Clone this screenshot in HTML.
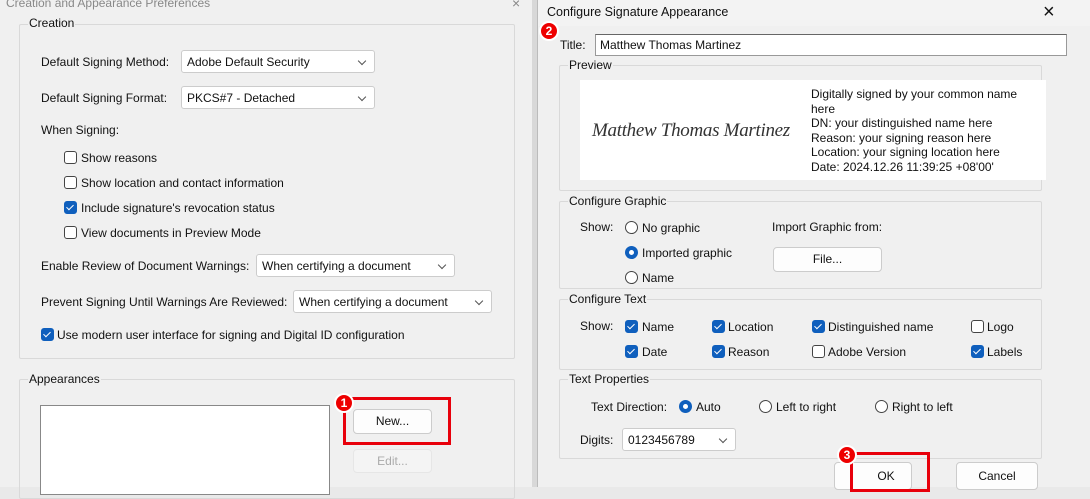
<!DOCTYPE html><html><head><style>
*{box-sizing:border-box}body{margin:0;width:1090px;height:487px;overflow:hidden;background:#e9e9e9;font-family:"Liberation Sans",sans-serif;font-size:12px;color:#111;position:relative}
.a{position:absolute;white-space:nowrap}
.grp{position:absolute;border:1px solid #d9d9d9;border-radius:2px}
.gl{position:absolute;top:-8px;left:8px;background:#f0f0f0;padding:0 1px;font-size:12px}
.sel{position:absolute;background:#fff;border:1px solid #ccc;border-radius:3px;height:23px;padding:4px 5px}
.sel:after{content:"";position:absolute;right:9px;top:7px;width:5px;height:5px;border-right:1px solid #555;border-bottom:1px solid #555;transform:rotate(45deg)}
.cb{position:absolute;width:13px;height:13px;border:1px solid #444;border-radius:3px;background:#fff}
.cb.on{background:#0f5fbd;border-color:#0f5fbd}
.cb.on:after{content:"";position:absolute;left:3px;top:1px;width:3px;height:6px;border-right:1.5px solid #fff;border-bottom:1.5px solid #fff;transform:rotate(45deg)}
.rb{position:absolute;width:13px;height:13px;border:1px solid #444;border-radius:50%;background:#fff}
.rb.on{border:4px solid #0f5fbd}
.btn{position:absolute;background:#fdfdfd;border:1px solid #ccc;border-radius:4px;text-align:center;line-height:23px}
.badge{position:absolute;width:20px;height:20px;border-radius:50%;background:#e00;border:2px solid #fff;color:#fff;font-weight:bold;font-size:12px;text-align:center;line-height:16px}
.red{position:absolute;border:3px solid #e8000b}
</style></head><body>
<div class="a" style="left:0;top:0;width:532px;height:487px;background:#f0f0f0"></div>
<div class="a" style="left:532px;top:0;width:5px;height:487px;background:#d8d8d8"></div>
<div class="a" style="left:6px;top:-4px;color:#888">Creation and Appearance Preferences</div>
<div class="a" style="left:512px;top:-5px;color:#888;font-size:14px">×</div>
<div class="grp" style="left:19px;top:24px;width:496px;height:335px"><span class="gl" style="top:-9px">Creation</span></div>
<div class="a" style="left:41px;top:55px">Default Signing Method:</div>
<div class="sel" style="left:181px;top:50px;width:194px">Adobe Default Security</div>
<div class="a" style="left:41px;top:91px">Default Signing Format:</div>
<div class="sel" style="left:181px;top:86px;width:194px">PKCS#7 - Detached</div>
<div class="a" style="left:41px;top:123px">When Signing:</div>
<div class="cb" style="left:64px;top:151px"></div><div class="a" style="left:81px;top:151px">Show reasons</div>
<div class="cb" style="left:64px;top:176px"></div><div class="a" style="left:81px;top:176px">Show location and contact information</div>
<div class="cb on" style="left:64px;top:201px"></div><div class="a" style="left:81px;top:201px">Include signature's revocation status</div>
<div class="cb" style="left:64px;top:226px"></div><div class="a" style="left:81px;top:226px">View documents in Preview Mode</div>
<div class="a" style="left:41px;top:259px">Enable Review of Document Warnings:</div>
<div class="sel" style="left:256px;top:254px;width:199px">When certifying a document</div>
<div class="a" style="left:41px;top:295px">Prevent Signing Until Warnings Are Reviewed:</div>
<div class="sel" style="left:293px;top:290px;width:199px">When certifying a document</div>
<div class="cb on" style="left:41px;top:328px"></div><div class="a" style="left:57px;top:328px">Use modern user interface for signing and Digital ID configuration</div>
<div class="grp" style="left:19px;top:379px;width:496px;height:120px"><span class="gl">Appearances</span></div>
<div class="a" style="left:40px;top:405px;width:290px;height:90px;background:#fff;border:1px solid #888"></div>
<div class="btn" style="left:353px;top:409px;width:79px;height:25px">New...</div>
<div class="btn" style="left:353px;top:449px;width:79px;height:24px;background:#f4f4f4;border-color:#e6e6e6;color:#aaa">Edit...</div>
<div class="red" style="left:343px;top:397px;width:108px;height:48px"></div>
<div class="badge" style="left:334px;top:393px">1</div>

<div class="a" style="left:537px;top:0;width:553px;height:487px;background:#f0f0f0;border-left:1px solid #bbb"></div>
<div class="a" style="left:538px;top:0;width:552px;height:26px;background:#f3f3f3"></div>
<div class="a" style="left:547px;top:5px;font-size:12.5px">Configure Signature Appearance</div>
<div class="a" style="left:1043px;top:1px;font-size:20px;font-weight:200">×</div>
<div class="a" style="left:560px;top:38px">Title:</div>
<div class="a" style="left:595px;top:34px;width:472px;height:22px;background:#fff;border:1px solid #999;border-top-color:#666;padding:3px 4px">Matthew Thomas Martinez</div>
<div class="badge" style="left:539px;top:21px">2</div>
<div class="grp" style="left:559px;top:65px;width:483px;height:126px"><span class="gl">Preview</span></div>
<div class="a" style="left:580px;top:80px;width:466px;height:100px;background:#fff"></div>
<div class="a" style="left:592px;top:120px;font-family:'Liberation Serif',serif;font-style:italic;font-size:19px;color:#333;letter-spacing:-0.3px">Matthew Thomas Martinez</div>
<div class="a" style="left:811px;top:87px;font-size:12px;line-height:14.5px">Digitally signed by your common name<br>here<br>DN: your distinguished name here<br>Reason: your signing reason here<br>Location: your signing location here<br>Date: 2024.12.26 11:39:25 +08'00'</div>
<div class="grp" style="left:559px;top:201px;width:483px;height:88px"><span class="gl">Configure Graphic</span></div>
<div class="a" style="left:580px;top:220px">Show:</div>
<div class="rb" style="left:625px;top:221px"></div><div class="a" style="left:642px;top:221px">No graphic</div>
<div class="rb on" style="left:625px;top:246px"></div><div class="a" style="left:642px;top:246px">Imported graphic</div>
<div class="rb" style="left:625px;top:271px"></div><div class="a" style="left:642px;top:271px">Name</div>
<div class="a" style="left:772px;top:220px">Import Graphic from:</div>
<div class="btn" style="left:773px;top:247px;width:109px;height:25px">File...</div>
<div class="grp" style="left:559px;top:299px;width:483px;height:71px"><span class="gl">Configure Text</span></div>
<div class="a" style="left:580px;top:319px">Show:</div>
<div class="cb on" style="left:625px;top:320px"></div><div class="a" style="left:642px;top:320px">Name</div>
<div class="cb on" style="left:712px;top:320px"></div><div class="a" style="left:728px;top:320px">Location</div>
<div class="cb on" style="left:812px;top:320px"></div><div class="a" style="left:828px;top:320px">Distinguished name</div>
<div class="cb" style="left:971px;top:320px"></div><div class="a" style="left:987px;top:320px">Logo</div>
<div class="cb on" style="left:625px;top:345px"></div><div class="a" style="left:642px;top:345px">Date</div>
<div class="cb on" style="left:712px;top:345px"></div><div class="a" style="left:728px;top:345px">Reason</div>
<div class="cb" style="left:812px;top:345px"></div><div class="a" style="left:828px;top:345px">Adobe Version</div>
<div class="cb on" style="left:971px;top:345px"></div><div class="a" style="left:987px;top:345px">Labels</div>
<div class="grp" style="left:559px;top:379px;width:483px;height:80px"><span class="gl">Text Properties</span></div>
<div class="a" style="left:591px;top:400px">Text Direction:</div>
<div class="rb on" style="left:679px;top:400px"></div><div class="a" style="left:696px;top:400px">Auto</div>
<div class="rb" style="left:759px;top:400px"></div><div class="a" style="left:776px;top:400px">Left to right</div>
<div class="rb" style="left:875px;top:400px"></div><div class="a" style="left:892px;top:400px">Right to left</div>
<div class="a" style="left:580px;top:433px">Digits:</div>
<div class="sel" style="left:622px;top:428px;width:114px;height:23px">0123456789</div>
<div class="btn" style="left:834px;top:462px;width:78px;height:28px;line-height:26px;padding-left:26px">OK</div>
<div class="btn" style="left:956px;top:462px;width:82px;height:28px;line-height:26px">Cancel</div>
<div class="red" style="left:850px;top:452px;width:80px;height:40px"></div>
<div class="badge" style="left:837px;top:445px">3</div>
</body></html>
